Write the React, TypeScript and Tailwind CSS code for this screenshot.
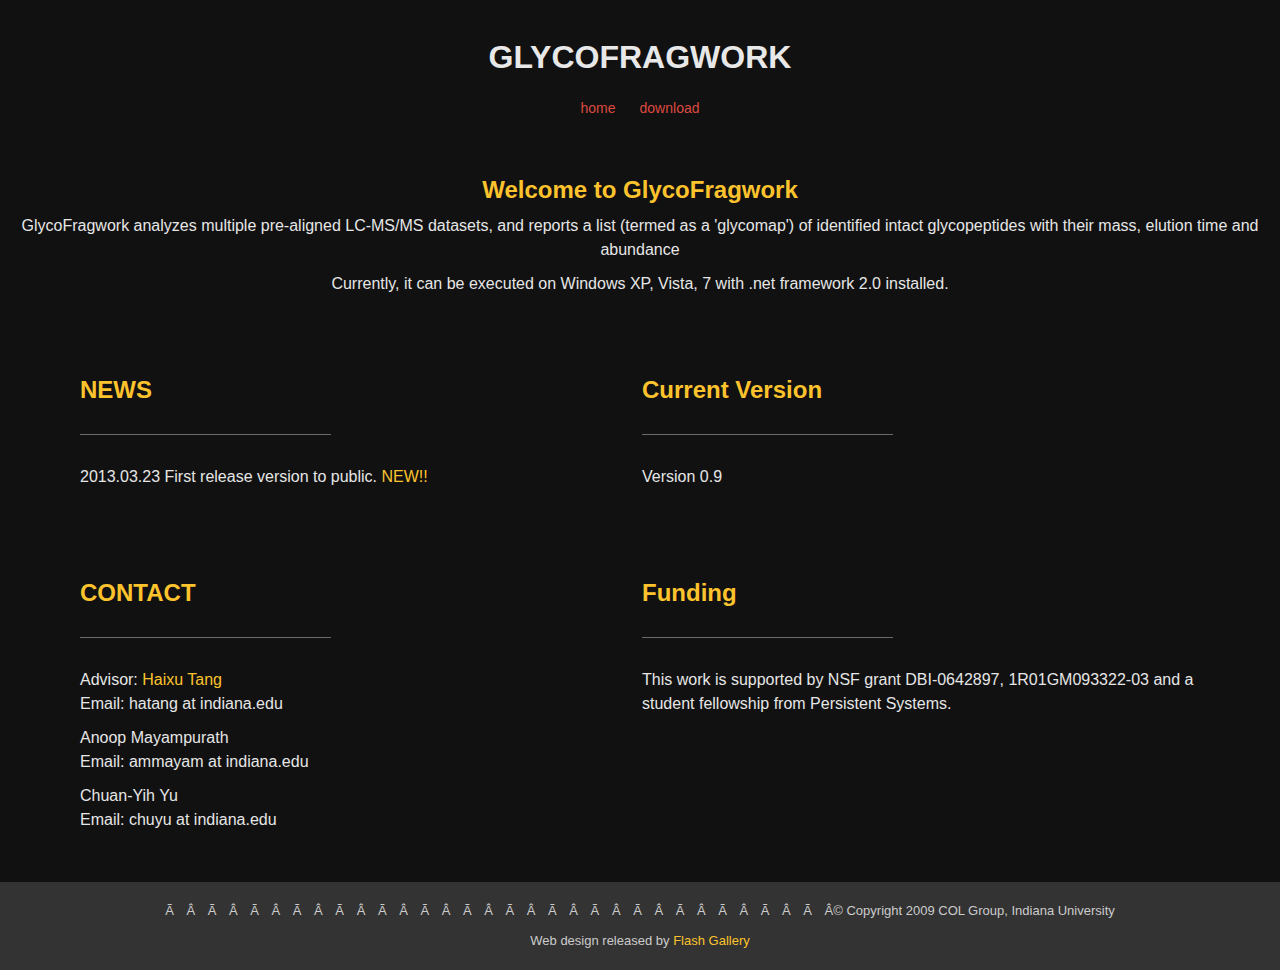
import React from "react";

const font = { fontFamily: '"Liberation Sans", Arial, Helvetica, sans-serif' };

function Section({ title, children }: { title: string; children: React.ReactNode }) {
  return (
    <div>
      <h2 className="text-[24px] leading-[28px] font-bold text-[#fcc32d]">{title}</h2>
      <div className="w-[251px] h-px bg-[#6a6a6a] mt-[30px] mb-[30px]" />
      <div className="text-[16px] leading-[24px] text-[#e6e6e6]">{children}</div>
    </div>
  );
}

export default function App() {
  const marks = "ÃÂÃÂÃÂÃÂÃÂÃÂÃÂÃÂÃÂÃÂÃÂÃÂÃÂÃÂÃÂÃ";
  return (
    <div className="min-h-[970px] bg-[#111111] flex flex-col" style={font}>
      <header className="pt-[39px] text-center">
        <h1 className="text-[32px] leading-[37px] font-bold text-[#e8e8e8]">GLYCOFRAGWORK</h1>
        <nav className="mt-[23px] flex justify-center gap-[24px] text-[14px] leading-[18px] text-[#dc4a40]">
          <a>home</a>
          <a>download</a>
        </nav>
      </header>

      <section className="mt-[59px] text-center px-[20px]">
        <h2 className="text-[24px] leading-[28px] font-bold text-[#fcc32d]">Welcome to GlycoFragwork</h2>
        <p className="mt-[10px] text-[16px] leading-[24px] text-[#e6e6e6]">
          GlycoFragwork analyzes multiple pre-aligned LC-MS/MS datasets, and reports a list (termed as a 'glycomap') of identified intact glycopeptides with their mass, elution time and abundance
        </p>
        <p className="mt-[10px] text-[16px] leading-[24px] text-[#e6e6e6]">
          Currently, it can be executed on Windows XP, Vista, 7 with .net framework 2.0 installed.
        </p>
      </section>

      <main className="mt-[80px] pl-[80px] pr-[78px] grid grid-cols-[562px_1fr] gap-y-[90px]">
        <Section title="NEWS">
          2013.03.23 First release version to public. <span className="text-[#fcc32d]">NEW!!</span>
        </Section>
        <Section title="Current Version">Version 0.9</Section>
        <Section title="CONTACT">
          <p>
            Advisor: <span className="text-[#fcc32d]">Haixu Tang</span>
            <br />
            Email: hatang at indiana.edu
          </p>
          <p className="mt-[10px]">
            Anoop Mayampurath
            <br />
            Email: ammayam at indiana.edu
          </p>
          <p className="mt-[10px]">
            Chuan-Yih Yu
            <br />
            Email: chuyu at indiana.edu
          </p>
        </Section>
        <Section title="Funding">
          This work is supported by NSF grant DBI-0642897, 1R01GM093322-03 and a student fellowship from Persistent Systems.
        </Section>
      </main>

      <footer className="mt-[50px] bg-[#333333] h-[88px] text-center text-[13px] leading-[16px] text-[#cccccc] pt-[21px]">
        <p className="whitespace-nowrap">
          <span className="tracking-[12.6px]">{marks}</span>
          <span>Â© Copyright 2009 COL Group, Indiana University</span>
        </p>
        <p className="mt-[14px]">
          Web design released by <span className="text-[#fcc32d]">Flash Gallery</span>
        </p>
      </footer>
    </div>
  );
}
